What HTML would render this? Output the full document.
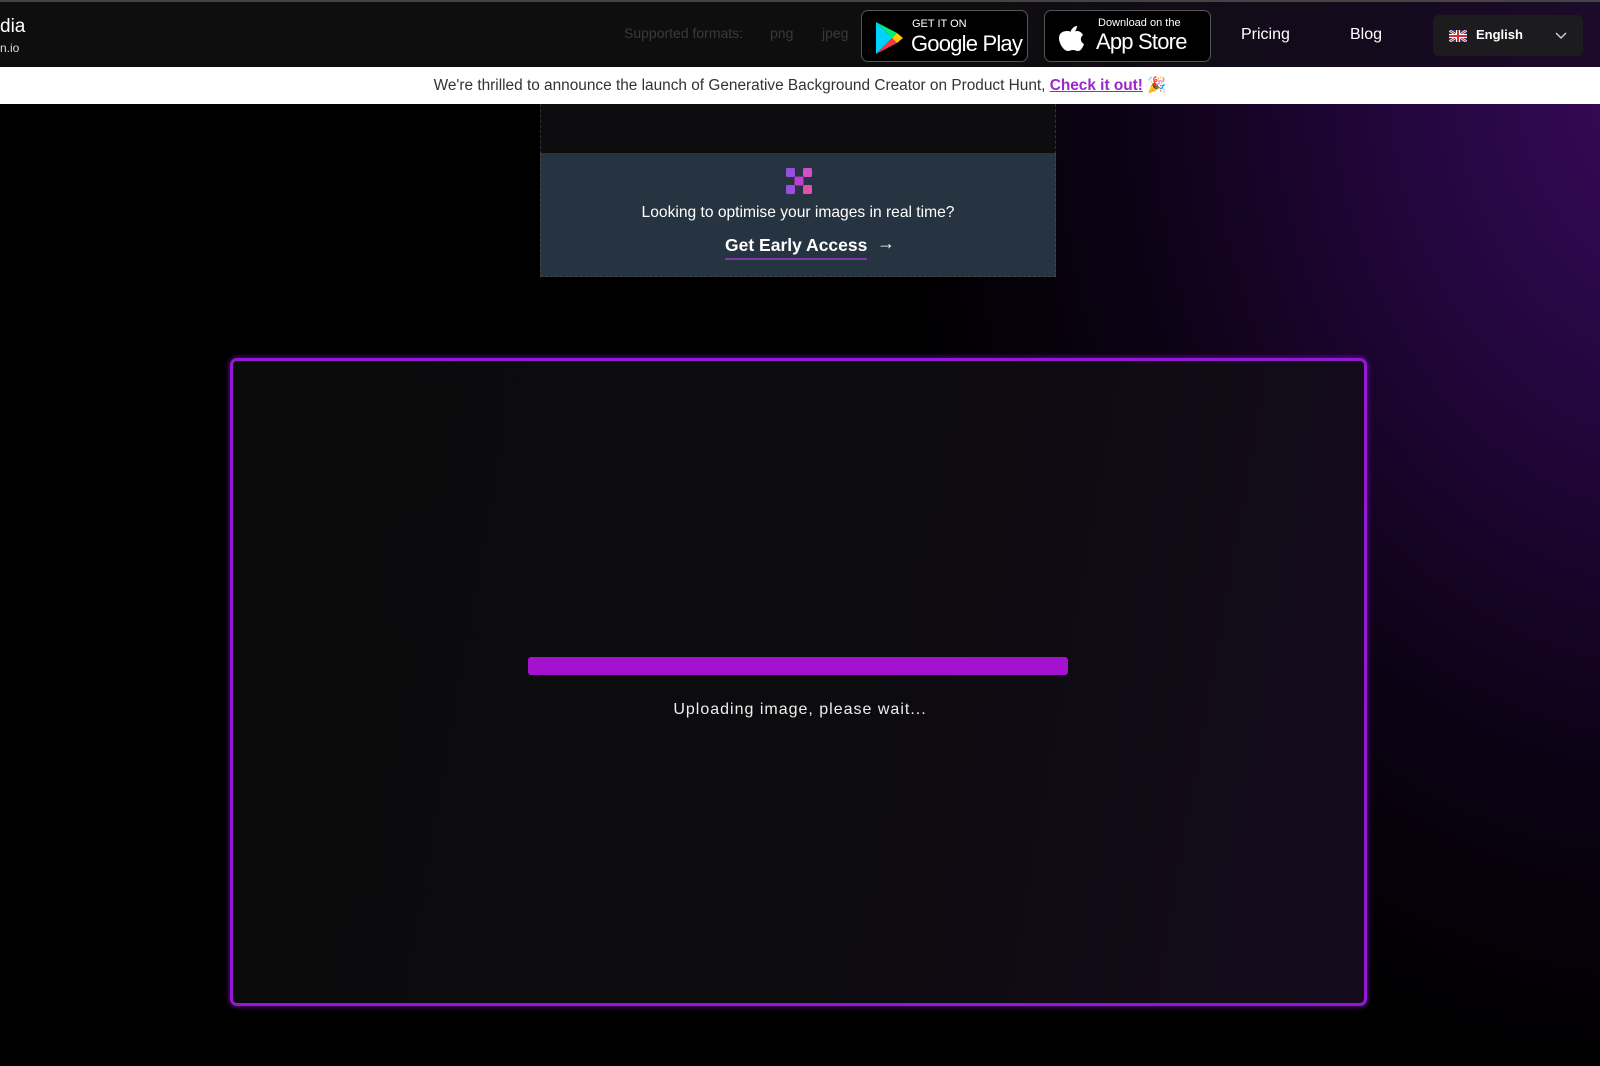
<!DOCTYPE html>
<html><head><meta charset="utf-8"><style>
*{box-sizing:border-box;margin:0;padding:0}
html,body{width:1600px;height:1066px;overflow:hidden}
body{position:relative;font-family:"Liberation Sans",Arial,sans-serif;background:#000;
background:radial-gradient(ellipse 800px 1000px at 1680px 80px,#3a0a5e 0%,#23063d 35%,#0c0214 70%,#000 100%),#000;}
.hdr{position:absolute;left:0;top:0;width:1600px;height:67px;background:linear-gradient(90deg,#0e0e0f 0%,#0e0e0f 60%,#140a1c 85%,#1c0a2a 100%);border-top:2px solid #444}
.logo1{position:absolute;left:0;top:14px;color:#fff;font-size:19px}
.logo2{position:absolute;left:0;top:39px;color:#ddd;font-size:12px}
.fmt{position:absolute;top:23px;color:#3a3a3a;font-size:14px}
.btn{position:absolute;top:8px;height:52px;background:#000;border:1px solid #555;border-radius:7px;color:#fff;white-space:nowrap}
.btn .s{position:absolute;font-size:11px}
.btn .b{position:absolute;font-size:22px;letter-spacing:-0.8px}
.nav{position:absolute;top:24px;color:#fff;font-size:16px}
.lang{position:absolute;left:1433px;top:13px;width:150px;height:41px;background:#1c1c1e;border-radius:6px;color:#fff;font-size:13px;font-weight:bold}
.ban{position:absolute;left:0;top:67px;width:1600px;height:37px;background:#fff;color:#333;font-size:15.4px;text-align:center;line-height:37px;z-index:2}
.ban a{color:#9c27c8;font-weight:bold;text-decoration:underline}
.p1{position:absolute;left:540px;top:104px;width:516px;height:50px;background:#0d0d10;border-left:1px dashed #333;border-right:1px dashed #333}
.p2{position:absolute;left:540px;top:153px;width:516px;height:124px;background:#263340;border:1px dashed #444;border-top:none;color:#fff;text-align:center}
.frame{position:absolute;left:230px;top:358px;width:1137px;height:648px;border:3px solid #9419d2;border-radius:7px;background:linear-gradient(100deg,#0b0b0c 0%,#0c0b0e 55%,#150b1d 100%);box-shadow:0 0 6px #7a10b0}
.bar{position:absolute;left:528px;top:657px;width:540px;height:18px;background:#a412d0;border-radius:3px}
.up{position:absolute;left:0;width:1600px;top:701px;text-align:center;color:#eee;font-size:16px;letter-spacing:1px}
</style></head><body>
<div class="hdr">
<div class="logo1">dia</div><div class="logo2">n.io</div>
<div class="fmt" style="left:624px">Supported formats:</div>
<div class="fmt" style="left:770px">png</div>
<div class="fmt" style="left:822px">jpeg</div>
<div class="btn" style="left:861px;width:167px">
<svg style="position:absolute;left:12px;top:10px" width="30" height="34" viewBox="0 0 30 34"><path d="M2 1 L18 17 L2 33Z" fill="#00d3ff"/><path d="M2 1 L23 12 L18 17Z" fill="#00f076"/><path d="M2 33 L23 22 L18 17Z" fill="#f33a4a"/><path d="M23 12 L29 17 L23 22 L18 17Z" fill="#ffc800"/></svg>
<span class="s" style="left:50px;top:7px">GET IT ON</span><span class="b" style="left:49px;top:20px">Google Play</span></div>
<div class="btn" style="left:1044px;width:167px">
<svg style="position:absolute;left:13px;top:9px" width="28" height="32" viewBox="0 0 28 32"><path d="M14 9c2-3 5-3 5-3s0 3-2 5c-2 2-4 1-4 1s-1-1 1-3zM9 11c3 0 4 1 5 1s3-1 5-1c3 0 5 2 6 4-3 2-3 7 1 9-1 3-3 7-6 7-2 0-3-1-5-1s-3 1-5 1C6 31 1 24 1 18c0-5 4-7 8-7z" fill="#fff"/></svg>
<span class="s" style="left:53px;top:6px">Download on the</span><span class="b" style="left:51px;top:18px">App Store</span></div>
<div class="nav" style="left:1241px">Pricing</div>
<div class="nav" style="left:1350px">Blog</div>
<div class="lang"><svg style="position:absolute;left:16px;top:15px" width="18" height="12" viewBox="0 0 18 12"><rect width="18" height="12" fill="#2a3a8a"/><path d="M0 0L18 12M18 0L0 12" stroke="#fff" stroke-width="2.5"/><path d="M0 0L18 12M18 0L0 12" stroke="#c33" stroke-width="1"/><path d="M9 0V12M0 6H18" stroke="#fff" stroke-width="4"/><path d="M9 0V12M0 6H18" stroke="#c33" stroke-width="2"/></svg><span style="position:absolute;left:43px;top:12px">English</span><svg style="position:absolute;left:122px;top:15px" width="12" height="10" viewBox="0 0 12 10"><path d="M1 3l5 5 5-5" stroke="#ccc" fill="none" stroke-width="1.5"/></svg></div>
</div>
<div class="ban">We're thrilled to announce the launch of Generative Background Creator on Product Hunt, <a>Check it out!</a> 🎉</div>
<div class="p1"></div>
<div class="p2">
<svg style="position:absolute;left:245px;top:15px" width="26" height="26" viewBox="0 0 26 26"><rect x="0" y="0" width="9" height="9" rx="1.5" fill="#9b4fe0"/><rect x="17" y="0" width="9" height="9" rx="1.5" fill="#d050c8"/><rect x="8.5" y="8.5" width="9" height="9" rx="1.5" fill="#c03fd0"/><rect x="0" y="17" width="9" height="9" rx="1.5" fill="#9b4fe0"/><rect x="17" y="17" width="9" height="9" rx="1.5" fill="#e050b0"/></svg>
<div style="position:absolute;left:0;width:100%;top:51px;font-size:15.6px">Looking to optimise your images in real time?</div>
<div style="position:absolute;left:184px;top:82px;font-size:17.5px;font-weight:bold;border-bottom:2px solid #7a3aa8;padding-bottom:2px">Get Early Access</div>
<div style="position:absolute;left:336px;top:80px;font-size:18px">→</div>
</div>
<div class="frame"></div>
<div class="bar"></div>
<div class="up">Uploading image, please wait...</div>
</body></html>
